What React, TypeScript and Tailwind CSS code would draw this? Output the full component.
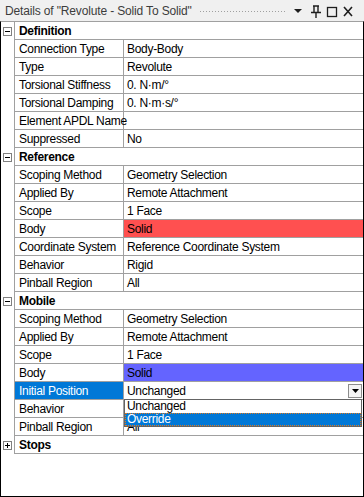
import { ReactNode } from "react";

type Row = {
  label: string;
  value?: string;
  valueClass?: string;
  labelSelected?: boolean;
  combo?: boolean;
};

type Section = {
  title: string;
  open: boolean;
  rows: Row[];
};

const sections: Section[] = [
  {
    title: "Definition",
    open: true,
    rows: [
      { label: "Connection Type", value: "Body-Body" },
      { label: "Type", value: "Revolute" },
      { label: "Torsional Stiffness", value: "0. N·m/°" },
      { label: "Torsional Damping", value: "0. N·m·s/°" },
      { label: "Element APDL Name", value: "" },
      { label: "Suppressed", value: "No" },
    ],
  },
  {
    title: "Reference",
    open: true,
    rows: [
      { label: "Scoping Method", value: "Geometry Selection" },
      { label: "Applied By", value: "Remote Attachment" },
      { label: "Scope", value: "1 Face" },
      { label: "Body", value: "Solid", valueClass: "bg-[#ff5050]" },
      { label: "Coordinate System", value: "Reference Coordinate System" },
      { label: "Behavior", value: "Rigid" },
      { label: "Pinball Region", value: "All" },
    ],
  },
  {
    title: "Mobile",
    open: true,
    rows: [
      { label: "Scoping Method", value: "Geometry Selection" },
      { label: "Applied By", value: "Remote Attachment" },
      { label: "Scope", value: "1 Face" },
      { label: "Body", value: "Solid", valueClass: "bg-[#6464ff]" },
      { label: "Initial Position", value: "Unchanged", labelSelected: true, combo: true },
      { label: "Behavior", value: "" },
      { label: "Pinball Region", value: "All" },
    ],
  },
  { title: "Stops", open: false, rows: [] },
];

const Expander = ({ open }: { open: boolean }) => (
  <div className="w-[9px] h-[9px] border border-[#808080] bg-white flex items-center justify-center relative">
    <div className="w-[5px] h-px bg-black" />
    {!open && <div className="absolute w-px h-[5px] bg-black" />}
  </div>
);

const Line = ({ children }: { children: ReactNode }) => (
  <div className="flex h-[18px]">{children}</div>
);

const TitleBar = () => (
  <div className="h-[21px] bg-[#f0f0f0] flex items-center pl-[5px] pr-[8px] text-[12px] tracking-[-0.15px] text-[#3c3c3c]">
    <span className="whitespace-nowrap">Details of "Revolute - Solid To Solid"</span>
    <div className="flex-1 mx-[7px] h-[3px] mt-[1px] bg-[radial-gradient(circle,#a0a0a0_0.6px,transparent_0.8px)] bg-[length:3px_3px]" />
    <svg width="62" height="14" viewBox="0 0 62 14" className="shrink-0">
      <path d="M0 5 h8 l-4 4 z" fill="#1e1e1e" />
      <g fill="none" stroke="#1e1e1e" strokeWidth="1.4">
        <path d="M19 2 h6 M20 2 v6 M24 2 v6 M17 8.5 h10 M22 9 v5" />
        <rect x="33.5" y="3.5" width="9" height="9" strokeWidth="1.3" />
        <path d="M50 3 l8 9 M58 3 l-8 9" strokeWidth="1.6" />
      </g>
    </svg>
  </div>
);

const App = () => {
  return (
    <div
      className="w-[364px] h-[497px] bg-white flex flex-col"
      style={{ fontFamily: '"Liberation Sans", Arial, sans-serif' }}
    >
      <TitleBar />
      <div className="flex-1 border-x border-b border-t border-black border-t-[#a0a0a0] relative text-[12px] tracking-[-0.3px] text-black">
        {sections.map((s) => (
          <div key={s.title}>
            <Line>
              <div className="w-[13px] flex items-center justify-center">
                <Expander open={s.open} />
              </div>
              <div className="flex-1 border-l border-b border-[#a0a0a0] flex items-center pl-[4px] font-bold">
                {s.title}
              </div>
            </Line>
            {s.rows.map((r, i) => (
              <Line key={i}>
                <div className="w-[13px]" />
                <div className="flex-1 border-l border-b border-[#a0a0a0] flex">
                  <div
                    className={
                      "w-[109px] border-r border-[#a0a0a0] flex items-center pl-[4px] whitespace-nowrap " +
                      (r.labelSelected ? "bg-[#0078d7] text-white" : "")
                    }
                  >
                    {r.label}
                  </div>
                  <div
                    className={
                      "flex-1 flex items-center pl-[3px] whitespace-nowrap overflow-hidden " +
                      (r.valueClass ?? "")
                    }
                  >
                    <span className="flex-1">{r.value}</span>
                    {r.combo && (
                      <div className="w-[14px] h-[14px] mr-[1px] border border-[#8c8c8c] bg-[#f4f4f4] flex items-center justify-center">
                        <svg width="7" height="4" viewBox="0 0 7 4">
                          <path d="M0 0 h7 l-3.5 4 z" fill="#000" />
                        </svg>
                      </div>
                    )}
                  </div>
                </div>
              </Line>
            ))}
          </div>
        ))}
        <div className="absolute left-[123px] top-[377px] w-[238px] h-[28px] bg-white border border-[#646464] text-[12px] leading-[13px]">
          <div className="h-[13px] pl-[2px] flex items-center">Unchanged</div>
          <div className="h-[13px] pl-[2px] flex items-center bg-[#0078d7] text-white outline-1 outline-dotted outline-[#e07a1e] -outline-offset-1">
            Override
          </div>
        </div>
      </div>
    </div>
  );
};

export default App;
